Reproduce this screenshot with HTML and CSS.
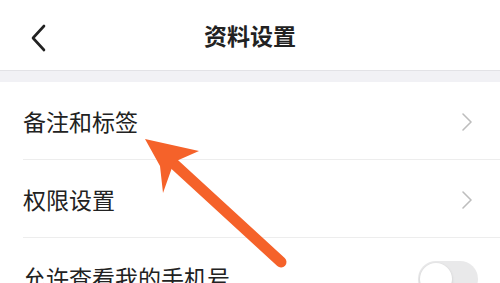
FILE: index.html
```html
<!DOCTYPE html>
<html>
<head>
  <meta charset="UTF-8">
  <title>资料设置</title>
  <link rel="stylesheet" href="styles.css">
</head>
<body>
  <div class="page">
    <!-- top bar -->
    <div class="topbar">
      <svg class="back" width="20" height="28" viewBox="0 0 20 28">
        <path d="M15 2 L4 14 L15 26" fill="none" stroke="#222" stroke-width="2.6" stroke-linecap="round" stroke-linejoin="round"/>
      </svg>
      <div class="title">资料设置</div>
    </div>
    <div class="gap"></div>

    <!-- list -->
    <div class="list">
      <div class="row">
        <span class="label">备注和标签</span>
        <svg class="chev" width="12" height="20" viewBox="0 0 12 20">
          <path d="M2 2 L10 10 L2 18" fill="none" stroke="#bdbdbd" stroke-width="1.6" stroke-linecap="round" stroke-linejoin="round"/>
        </svg>
      </div>
      <div class="row">
        <span class="label">权限设置</span>
        <svg class="chev" width="12" height="20" viewBox="0 0 12 20">
          <path d="M2 2 L10 10 L2 18" fill="none" stroke="#bdbdbd" stroke-width="1.6" stroke-linecap="round" stroke-linejoin="round"/>
        </svg>
      </div>
      <div class="row">
        <span class="label">允许查看我的手机号</span>
        <div class="switch"><div class="knob"></div></div>
      </div>
    </div>

    <!-- annotation arrow -->
    <svg class="arrow" width="500" height="283" viewBox="0 0 500 283">
      <line x1="172" y1="162" x2="281" y2="262" stroke="#f5622a" stroke-width="11" stroke-linecap="round"/>
      <polygon points="145,139 199,151 174,162 163,193 160,166" fill="#f5622a"/>
    </svg>
  </div>
</body>
</html>
```

FILE: styles.css
```css
html,body{margin:0;padding:0;background:#fff;}
body{font-family:"Noto Sans CJK SC","Noto Sans",sans-serif;color:#222;}
.page{position:relative;width:500px;height:283px;overflow:hidden;}

/* top bar */
.topbar{height:70px;display:flex;align-items:center;justify-content:center;position:relative;border-bottom:1px solid #e2e2e6;}
.back{position:absolute;left:29px;top:24px;}
.title{font-size:23px;font-weight:bold;color:#222;}
.gap{height:11px;background:#f1f1f5;}

/* list rows */
.list{padding-left:23px;}
.row{height:77px;display:flex;align-items:center;justify-content:space-between;padding-right:27px;border-bottom:1px solid #ededed;}
.label{font-size:23px;color:#222;}
.chev{margin-top:2px;}

/* toggle */
.switch{width:60px;height:36px;border-radius:18px;background:#e9e9ea;margin-right:-5px;margin-top:4px;position:relative;}
.knob{position:absolute;left:2px;top:2px;width:32px;height:32px;border-radius:50%;background:#fff;box-shadow:0 1px 3px rgba(0,0,0,.15);}

/* overlay */
.arrow{position:absolute;left:0;top:0;pointer-events:none;}
```
